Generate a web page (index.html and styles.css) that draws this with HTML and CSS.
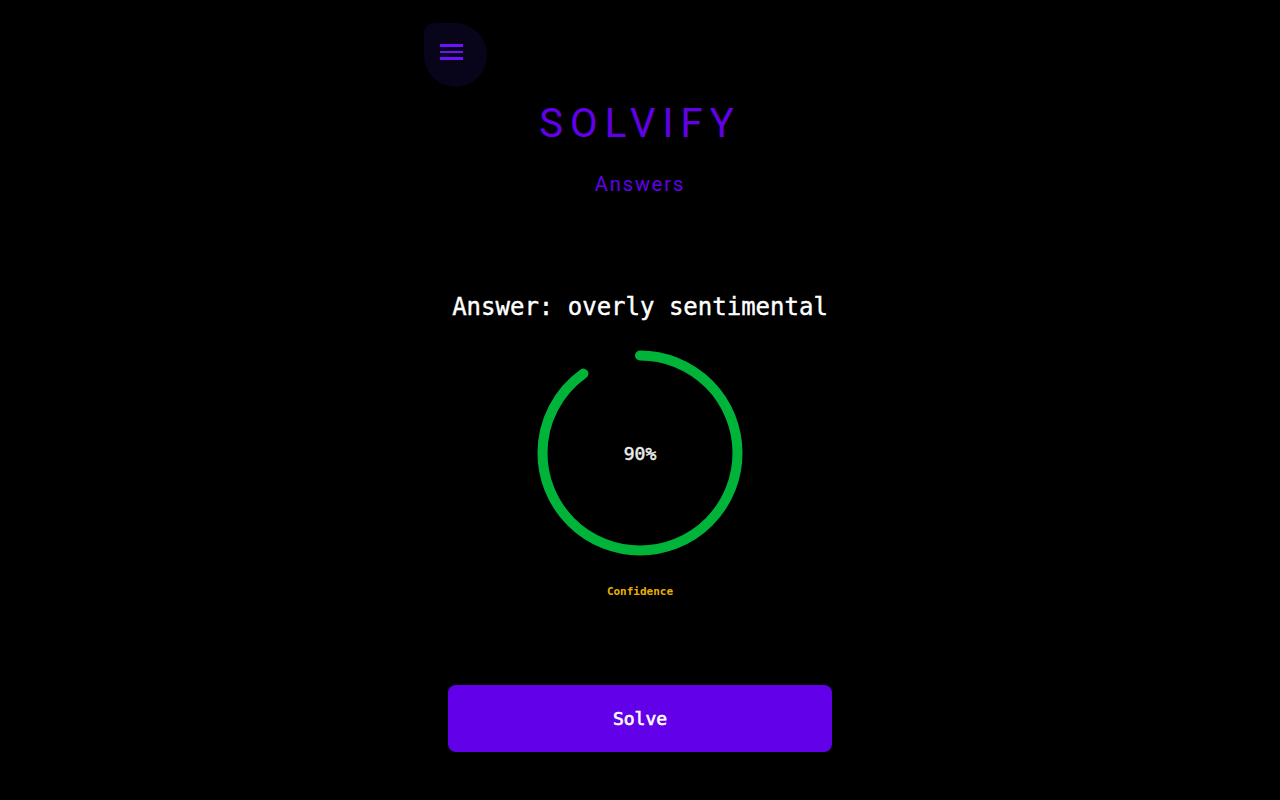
FILE: index.html
```html
<!DOCTYPE html>
<html lang="en">
<head>
<meta charset="utf-8">
<title>Solvify</title>
<link rel="stylesheet" href="styles.css">
</head>
<body>
<div class="page">
  <header class="top">
    <button class="menu-btn" aria-label="Menu">
      <span class="bar"></span><span class="bar"></span><span class="bar"></span>
    </button>
    <h1 class="brand">SOLVIFY</h1>
    <div class="subtitle">Answers</div>
  </header>
  <main class="result">
    <div class="answer">Answer: overly sentimental</div>
    <div class="gauge">
      <svg class="ring" width="206" height="206" viewBox="0 0 206 206">
        <circle cx="103" cy="103" r="97.5" fill="none" stroke="#00b339" stroke-width="10" stroke-linecap="round"
          stroke-dasharray="551.3 612.6" transform="rotate(-90 103 103)"/>
      </svg>
      <div class="pct">90%</div>
    </div>
    <div class="conf">Confidence</div>
  </main>
  <button class="solve">Solve</button>
</div>
</body>
</html>
```
FILE: styles.css
```css
html, body {
  margin: 0;
  padding: 0;
  background: #000;
  height: 100%;
}
body {
  font-family: "DejaVu Sans Mono", monospace;
  color: #fff;
}
.page {
  width: 432px;
  margin: 0 auto;
  padding: 23px 24px 0;
  box-sizing: border-box;
  display: flex;
  flex-direction: column;
  align-items: center;
}
.top {
  width: 100%;
  display: flex;
  flex-direction: column;
  align-items: center;
}
.menu-btn {
  align-self: flex-start;
  margin-left: -24px;
  width: 63px;
  height: 64px;
  border: none;
  padding: 0 8px 6px 0;
  box-sizing: border-box;
  background: #08041a;
  border-radius: 10px 50% 50% 50%;
  display: flex;
  flex-direction: column;
  align-items: center;
  justify-content: center;
  gap: 4.2px;
  cursor: pointer;
}
.bar {
  display: block;
  width: 23px;
  height: 2.4px;
  background: #6c12ff;
}
.brand {
  margin: 13px 0 0;
  font-family: Roboto, sans-serif;
  font-weight: 400;
  font-size: 40px;
  line-height: 48px;
  letter-spacing: 7.1px;
  color: #6300ea;
}
.subtitle {
  margin: 24px 0 0;
  font-family: Roboto, sans-serif;
  font-size: 20px;
  line-height: 24px;
  letter-spacing: 1.9px;
  color: #6300ea;
}
.result {
  margin-top: 97px;
  display: flex;
  flex-direction: column;
  align-items: center;
}
.answer {
  font-size: 24px;
  line-height: 28px;
  color: #fff;
  -webkit-text-stroke: 0.4px #fff;
}
.gauge {
  margin-top: 29px;
  width: 206px;
  height: 206px;
  position: relative;
}
.ring {
  display: block;
}
.pct {
  position: absolute;
  inset: 0;
  display: flex;
  align-items: center;
  justify-content: center;
  font-size: 18px;
  font-weight: 400;
  color: #eeeeee;
  -webkit-text-stroke: 0.5px #eeeeee;
}
.conf {
  margin-top: 29px;
  font-size: 11px;
  line-height: 14px;
  font-weight: 700;
  color: #e8b000;
}
.solve {
  margin-top: 86px;
  width: 384px;
  height: 67px;
  border: none;
  border-radius: 8px;
  background: #6300ea;
  color: #fff;
  font-family: "DejaVu Sans Mono", monospace;
  font-size: 18px;
  font-weight: 400;
  -webkit-text-stroke: 0.6px #fff;
  cursor: pointer;
}
```
